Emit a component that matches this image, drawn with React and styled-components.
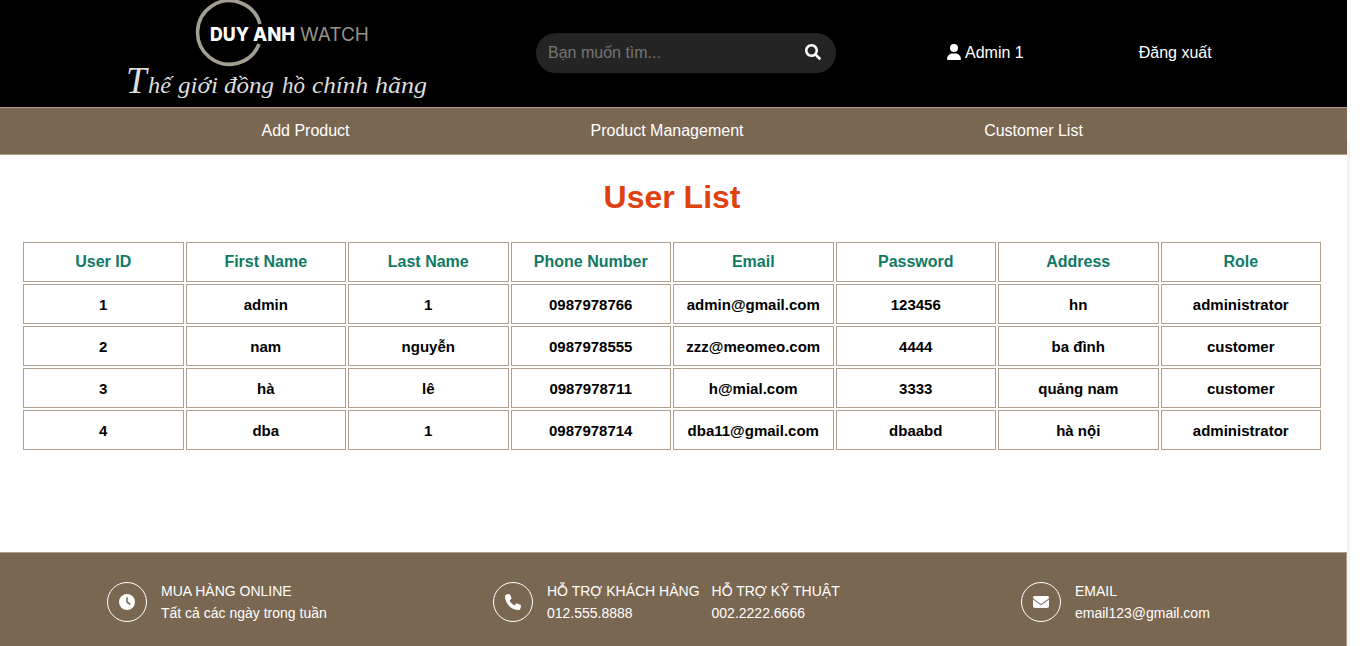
import React from "react";
import styled, { createGlobalStyle } from "styled-components";
import { FaUser, FaClock, FaEnvelope, FaPhone } from "react-icons/fa6";
import { FaSearch } from "react-icons/fa";

const GlobalStyle = createGlobalStyle`
  * { box-sizing: border-box; }
  body {
    margin: 0;
    overflow: hidden;
    background: #fff;
    font-family: "Liberation Sans", Arial, sans-serif;
    font-size: 16px;
    color: #000;
  }
`;

const Page = styled.div`
  display: flex;
  width: 1360px;
  height: 646px;
`;

const Content = styled.div`
  display: flex;
  flex-direction: column;
  width: 1347px;
`;

const Gutter = styled.div`
  flex: 1;
  margin-top: 140px;
  border-left: 3px solid #f4f4f4;
`;

const TopBar = styled.header`
  display: flex;
  height: 107px;
  background: #000;
  color: #fff;
`;

const LogoLink = styled.a`
  width: 536px;
  height: 107px;
  svg { display: block; }
`;

const SearchBox = styled.form`
  display: flex;
  align-items: center;
  justify-content: space-between;
  width: 300px;
  height: 40px;
  margin-top: 33px;
  padding: 0 15px 0 12px;
  border-radius: 20px;
  background: #242424;
  svg { display: block; margin-top: -2px; }
`;

const SearchInput = styled.input`
  width: 220px;
  height: 30px;
  padding: 0;
  border: 0;
  outline: 0;
  background: transparent;
  color: #fff;
  font: 16px "Liberation Sans", Arial, sans-serif;
  &::placeholder { color: #757575; opacity: 1; }
`;

const AccountLink = styled.a`
  display: flex;
  align-items: center;
  gap: 3px;
  height: 20px;
  margin-top: 43px;
  margin-left: ${(p) => p.$offset}px;
  white-space: nowrap;
  svg { margin-top: -2px; }
`;

const NavBar = styled.nav`
  display: flex;
  height: 48px;
  padding: 0 123px;
  border-top: 1px solid #ae9f8e;
  border-bottom: 1px solid #ae9f8e;
  background: #7a6751;
  color: #fff;
`;

const NavItem = styled.a`
  width: ${(p) => p.$width}px;
  text-align: center;
  line-height: 46px;
`;

const Main = styled.main`
  flex: 1;
  padding: 0 24px 0 21px;
`;

const Title = styled.h1`
  margin: 0;
  padding-top: 22px;
  height: 85px;
  font-size: 32px;
  line-height: 40px;
  text-align: center;
  color: #df420f;
`;

const UserTable = styled.table`
  width: 1302px;
  table-layout: fixed;
  border-collapse: separate;
  border-spacing: 2px;
`;

const HeadCell = styled.th`
  height: 40px;
  padding: 0;
  border: 1px solid #ae9f8e;
  font-size: 16px;
  color: #117964;
`;

const Cell = styled.td`
  height: 40px;
  padding: 0;
  border: 1px solid #ae9f8e;
  font-size: 15px;
  font-weight: bold;
  text-align: center;
`;

const Footer = styled.footer`
  display: flex;
  height: 94px;
  padding: 29px 0 0 107px;
  border-top: 1px solid #ae9f8e;
  border-right: 1px solid #ae9f8e;
  background: #7a6751;
  color: #fff;
`;

const Contact = styled.section`
  display: flex;
  width: ${(p) => p.$width}px;
`;

const RoundIcon = styled.span`
  display: flex;
  align-items: center;
  justify-content: center;
  width: 40px;
  height: 40px;
  margin-right: 14px;
  border: 1px solid #fff;
  border-radius: 50%;
`;

const ContactText = styled.div`
  margin-top: -2px;
  margin-right: 12px;
  font-size: 14px;
  line-height: 22px;
  white-space: nowrap;
`;

const Brand = styled.text`
  font-family: Inter, sans-serif;
  font-weight: ${(p) => (p.$strong ? 800 : 400)};
  font-size: 18.5px;
  fill: ${(p) => (p.$strong ? "#fff" : "#96938a")};
`;

const Tagline = styled.text`
  font-family: "Liberation Serif", serif;
  font-style: italic;
  font-size: ${(p) => p.$size || 24}px;
  fill: #dedede;
`;

const columns = ["User ID", "First Name", "Last Name", "Phone Number", "Email", "Password", "Address", "Role"];

const users = [
  ["1", "admin", "1", "0987978766", "admin@gmail.com", "123456", "hn", "administrator"],
  ["2", "nam", "nguyễn", "0987978555", "zzz@meomeo.com", "4444", "ba đình", "customer"],
  ["3", "hà", "lê", "0987978711", "h@mial.com", "3333", "quảng nam", "customer"],
  ["4", "dba", "1", "0987978714", "dba11@gmail.com", "dbaabd", "hà nội", "administrator"],
];

const taglineWords = [
  ["hế", 148, 23],
  ["giới", 178, 40],
  ["đồng", 224, 50],
  ["hồ", 282, 23],
  ["chính", 312, 56],
  ["hãng", 375, 52],
];

function Logo() {
  return (
    <svg width="536" height="107" viewBox="0 0 536 107">
      <path d="M260 24 A31.8 31.8 0 1 0 259 44" fill="none" stroke="#a29f92" strokeWidth="3.6" />
      <Brand $strong x="210" y="40.5" textLength="39" lengthAdjust="spacingAndGlyphs">DUY</Brand>
      <Brand $strong x="253" y="40.5" textLength="42" lengthAdjust="spacingAndGlyphs">ANH</Brand>
      <Brand x="300" y="40.5" textLength="69" lengthAdjust="spacingAndGlyphs">WATCH</Brand>
      <Tagline $size={37} x="126" y="93">T</Tagline>
      {taglineWords.map(([word, x, width]) => (
        <Tagline key={word} x={x} y="93" textLength={width} lengthAdjust="spacingAndGlyphs">{word}</Tagline>
      ))}
    </svg>
  );
}

export default function App() {
  return (
    <Page>
      <GlobalStyle />
      <Content>
        <TopBar>
          <LogoLink><Logo /></LogoLink>
          <SearchBox>
            <SearchInput placeholder="Bạn muốn tìm..." />
            <FaSearch size={16} />
          </SearchBox>
          <AccountLink $offset={110}><FaUser size={16} />Admin 1</AccountLink>
          <AccountLink $offset={115}>Đăng xuất</AccountLink>
        </TopBar>
        <NavBar>
          <NavItem $width={365}>Add Product</NavItem>
          <NavItem $width={358}>Product Management</NavItem>
          <NavItem $width={375}>Customer List</NavItem>
        </NavBar>
        <Main>
          <Title>User List</Title>
          <UserTable>
            <thead>
              <tr>{columns.map((c) => <HeadCell key={c}>{c}</HeadCell>)}</tr>
            </thead>
            <tbody>
              {users.map((u) => (
                <tr key={u[0]}>{u.map((v, i) => <Cell key={i}>{v}</Cell>)}</tr>
              ))}
            </tbody>
          </UserTable>
        </Main>
        <Footer>
          <Contact $width={386}>
            <RoundIcon><FaClock size={16} /></RoundIcon>
            <ContactText>MUA HÀNG ONLINE<br />Tất cả các ngày trong tuần</ContactText>
          </Contact>
          <Contact $width={528}>
            <RoundIcon><FaPhone size={16} /></RoundIcon>
            <ContactText>HỖ TRỢ KHÁCH HÀNG<br />012.555.8888</ContactText>
            <ContactText>HỖ TRỢ KỸ THUẬT<br />002.2222.6666</ContactText>
          </Contact>
          <Contact $width={240}>
            <RoundIcon><FaEnvelope size={16} /></RoundIcon>
            <ContactText>EMAIL<br />email123@gmail.com</ContactText>
          </Contact>
        </Footer>
      </Content>
      <Gutter />
    </Page>
  );
}
